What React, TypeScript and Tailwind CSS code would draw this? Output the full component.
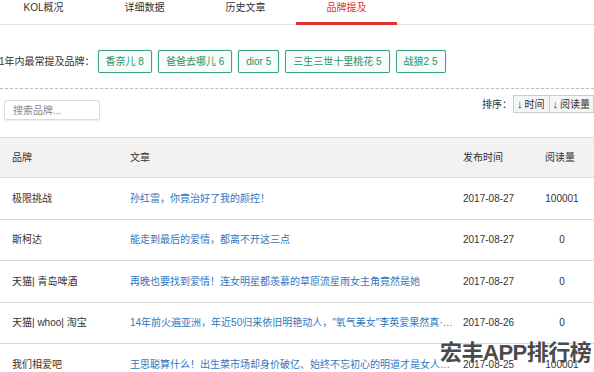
import React from 'react'

const font = { fontFamily: '"Liberation Sans", "Noto Sans CJK SC", sans-serif' }

const tabs = ['KOL概况', '详细数据', '历史文章', '品牌提及']
const brands = ['香奈儿 8', '爸爸去哪儿 6', 'dior 5', '三生三世十里桃花 5', '战狼2 5']

const rows = [
    { brand: '极限挑战', title: '孙红雷，你竟治好了我的颜控！', date: '2017-08-27', reads: '100001' },
    { brand: '斯柯达', title: '能走到最后的爱情，都离不开这三点', date: '2017-08-27', reads: '0' },
    { brand: '天猫| 青岛啤酒', title: '再晚也要找到爱情！连女明星都羡慕的草原流星雨女主角竟然是她', date: '2017-08-27', reads: '0' },
    { brand: '天猫| whoo| 淘宝', title: '14年前火遍亚洲，年近50归来依旧明艳动人，"氧气美女"李英爱果然真·女神', date: '2017-08-26', reads: '0' },
    { brand: '我们相爱吧', title: '王思聪算什么！出生菜市场却身价破亿、始终不忘初心的明道才是女人最爱的男人', date: '2017-08-25', reads: '100001' },
]

export default function App() {
    return (
        <div className="relative w-[594px] h-[372px] overflow-hidden bg-white text-[10px] text-[#333]" style={font}>
            {/* tabs */}
            <div className="flex h-[25px] border-b border-[#e2e2e2]">
                <div className="flex ml-[-7px]">
                    {tabs.map((t, i) => (
                        <div
                            key={t}
                            className={
                                i === 3
                                    ? 'w-[101px] h-[25px] text-center leading-[15px] text-[#e0312f] border-b-[3px] border-[#e0312f]'
                                    : 'w-[101px] h-[25px] text-center leading-[15px] text-[#333]'
                            }
                        >
                            {t}
                        </div>
                    ))}
                </div>
            </div>

            {/* brands mentioned */}
            <div className="flex items-center pt-[25px] pb-[15px] border-b border-dashed border-[#bbb]">
                <span className="whitespace-nowrap ml-[-1px] mr-[3px]">1年内最常提及品牌：</span>
                <div className="flex gap-[6px]">
                    {brands.map((b) => (
                        <span
                            key={b}
                            className="h-[23px] px-[7px] flex items-center whitespace-nowrap border border-[#3ea381] rounded-[2px] bg-[#f7fdfa] text-[#2f8f63] shadow-[0_0_1px_#5fb38f]"
                        >
                            {b}
                        </span>
                    ))}
                </div>
            </div>

            {/* search + sort */}
            <div className="flex justify-between items-start pl-[4px] pt-[6px] h-[48px]">
                <div className="mt-[5px] w-[96px] h-[20px] border border-[#dcdcdc] rounded-[2px] flex items-center pl-[8px] text-[#888] shadow-[0_1px_1px_#eee]">
                    搜索品牌...
                </div>
                <div className="flex items-center">
                    <span className="mr-[1px]">排序：</span>
                    <span className="h-[18px] pl-[3px] pr-[4px] flex items-center border border-[#ccc] bg-[#f6f6f6]">
                        <span className="mr-[2px] font-bold text-[11px]">↓</span>时间
                    </span>
                    <span className="h-[18px] pl-[3px] pr-[3px] flex items-center border border-l-0 border-[#ccc] bg-[#f6f6f6]">
                        <span className="mr-[2px] font-bold text-[11px]">↓</span>阅读量
                    </span>
                </div>
            </div>

            {/* table */}
            <div className="flex h-[41px] items-center bg-[#f2f2f2] border-y border-[#dcdcdc]">
                <div className="w-[130px] pl-[12px]">品牌</div>
                <div className="w-[333px]">文章</div>
                <div className="w-[67px]">发布时间</div>
                <div className="w-[64px] text-center pr-[4px]">阅读量</div>
            </div>
            {rows.map((r) => (
                <div key={r.title} className="flex h-[41.5px] items-center border-b border-[#d8d8d8]">
                    <div className="w-[130px] pl-[12px] whitespace-nowrap">{r.brand}</div>
                    <div className="w-[333px] pr-[8px] truncate text-[#2f77c0]">{r.title}</div>
                    <div className="w-[67px]">{r.date}</div>
                    <div className="w-[64px] text-center">{r.reads}</div>
                </div>
            ))}

            {/* watermark */}
            <div className="absolute left-[440px] top-[336px] text-[22px] font-bold text-[#4a4a4a] whitespace-nowrap tracking-[-0.5px] [text-shadow:0_0_2px_#fff]">
                宏丰APP排行榜
            </div>
        </div>
    )
}
